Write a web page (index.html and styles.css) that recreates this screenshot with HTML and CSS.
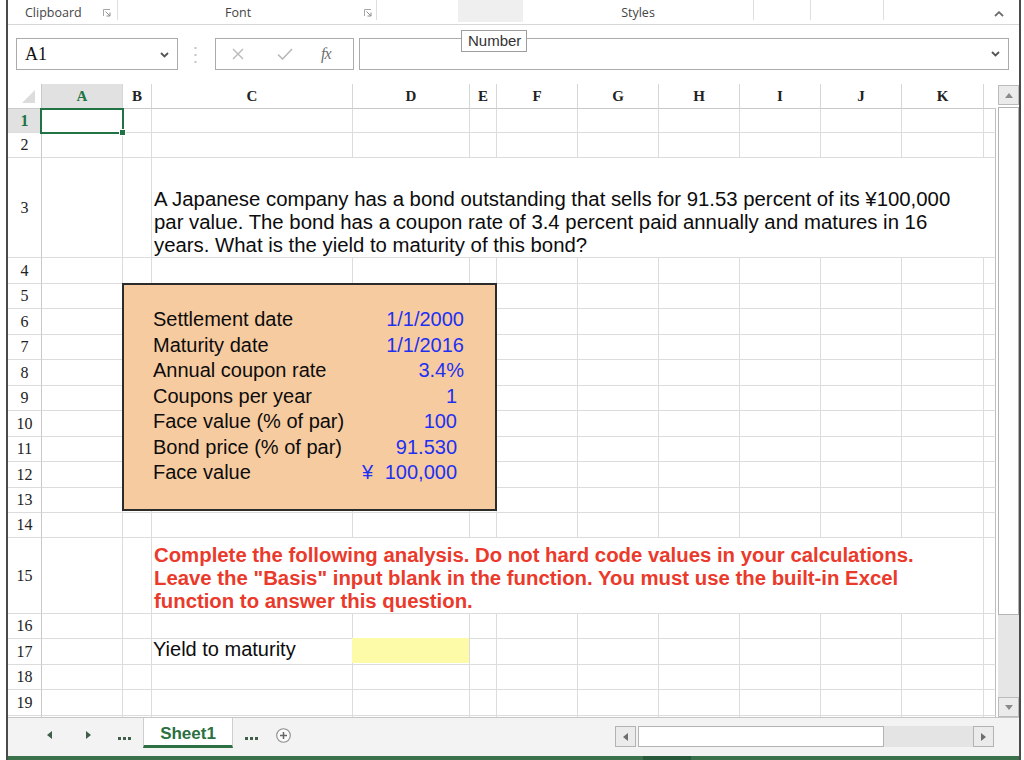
FILE: index.html
```html
<!DOCTYPE html>
<html lang="en">
<head>
  <meta charset="UTF-8">
  <title>Bond yield - Sheet1</title>
  <link rel="stylesheet" href="styles.css">
</head>
<body>

<div class="window">

  <div class="ribbon">
    <div class="group clip">
      <span>Clipboard</span>
      <svg class="launcher" width="8" height="8" viewBox="0 0 8 8"><path d="M0.5 7V0.5H7" fill="none" stroke="#a6a6a6"/><path d="M2.5 2.5L7 7M7 3.5V7H3.5" fill="none" stroke="#8c8c8c"/></svg>
    </div>
    <div class="group font-group">
      <span>Font</span>
      <svg class="launcher" width="8" height="8" viewBox="0 0 8 8"><path d="M0.5 7V0.5H7" fill="none" stroke="#a6a6a6"/><path d="M2.5 2.5L7 7M7 3.5V7H3.5" fill="none" stroke="#8c8c8c"/></svg>
    </div>
    <div class="group blank"></div>
    <div class="shaded"></div>
    <div class="group styles"><span>Styles</span></div>
    <div class="group cells"></div>
    <div class="group editing"></div>
    <div class="ribbon-end">
      <svg width="10" height="6" viewBox="0 0 10 6"><polyline points="1,5 5,1.2 9,5" fill="none" stroke="#6b6b6b" stroke-width="1.8"/></svg>
    </div>
  </div>

  <div class="formula-bar">
    <div class="name-box">
      <span>A1</span>
      <svg width="9" height="6" viewBox="0 0 9 6"><polyline points="1,1 4.5,4.5 8,1" fill="none" stroke="#555" stroke-width="1.8"/></svg>
    </div>
    <svg class="grip" width="3" height="20" viewBox="0 0 3 20"><rect x="0.5" y="2" width="2" height="2" fill="#c4c4c4"/><rect x="0.5" y="9" width="2" height="2" fill="#c4c4c4"/><rect x="0.5" y="16" width="2" height="2" fill="#c4c4c4"/></svg>
    <div class="fx-buttons">
      <svg class="cancel" width="12" height="12" viewBox="0 0 12 12"><path d="M1 1L11 11M11 1L1 11" stroke="#b9b9b9" stroke-width="1.4"/></svg>
      <svg class="enter" width="16" height="12" viewBox="0 0 16 12"><polyline points="1,6.5 5.5,11 15,1" fill="none" stroke="#b9b9b9" stroke-width="1.6"/></svg>
      <span class="fx">fx</span>
    </div>
    <div class="formula-input">
      <svg width="9" height="6" viewBox="0 0 9 6"><polyline points="1,1 4.5,4.5 8,1" fill="none" stroke="#555" stroke-width="1.8"/></svg>
    </div>
    <div class="tooltip">Number</div>
  </div>

  <div class="sheet-area">
    <div class="grid" id="grid">
      <div class="corner">
        <svg width="13" height="13" viewBox="0 0 13 13"><polygon points="13,0 13,13 0,13" fill="#dcdcdc"/></svg>
      </div>

      <div class="selection"><span class="handle"></span></div>

      <div class="question">
        <span>A Japanese company has a bond outstanding that sells for 91.53 percent of its ¥100,000</span>
        <span>par value. The bond has a coupon rate of 3.4 percent paid annually and matures in 16</span>
        <span>years. What is the yield to maturity of this bond?</span>
      </div>

      <div class="input-box">
        <div class="inputs">
          <span class="label">Settlement date</span><span class="val">1/1/2000</span>
          <span class="label">Maturity date</span><span class="val">1/1/2016</span>
          <span class="label">Annual coupon rate</span><span class="val">3.4%</span>
          <span class="label">Coupons per year</span><span class="val num">1</span>
          <span class="label">Face value (% of par)</span><span class="val num">100</span>
          <span class="label">Bond price (% of par)</span><span class="val num">91.530</span>
          <span class="label">Face value</span><span class="val num money"><span>¥</span><span>100,000</span></span>
        </div>
      </div>

      <div class="warning">
        <span>Complete the following analysis. Do not hard code values in your calculations.</span>
        <span>Leave the "Basis" input blank in the function. You must use the built-in Excel</span>
        <span>function to answer this question.</span>
      </div>

      <div class="ytm-label">Yield to maturity</div>
      <div class="ytm-answer"></div>
    </div>

    <div class="vscroll">
      <div class="sb-btn up"><svg width="8" height="5" viewBox="0 0 8 5"><polygon points="0,5 4,0 8,5" fill="#8a8a8a"/></svg></div>
      <div class="sb-thumb"></div>
      <div class="sb-track"></div>
      <div class="sb-btn down"><svg width="8" height="5" viewBox="0 0 8 5"><polygon points="0,0 8,0 4,5" fill="#8a8a8a"/></svg></div>
    </div>
  </div>

  <div class="tabs">
    <svg class="nav-prev" width="5" height="8" viewBox="0 0 5 8"><polygon points="5,0 5,8 0,4" fill="#3f5f4a"/></svg>
    <svg class="nav-next" width="5" height="8" viewBox="0 0 5 8"><polygon points="0,0 0,8 5,4" fill="#3f5f4a"/></svg>
    <svg class="dots first" width="13" height="3" viewBox="0 0 13 3"><rect x="0" y="0" width="3" height="3" fill="#3f5f4a"/><rect x="5" y="0" width="3" height="3" fill="#3f5f4a"/><rect x="10" y="0" width="3" height="3" fill="#3f5f4a"/></svg>
    <div class="tab">Sheet1</div>
    <svg class="dots" width="13" height="3" viewBox="0 0 13 3"><rect x="0" y="0" width="3" height="3" fill="#3f5f4a"/><rect x="5" y="0" width="3" height="3" fill="#3f5f4a"/><rect x="10" y="0" width="3" height="3" fill="#3f5f4a"/></svg>
    <svg class="add-sheet" width="15" height="15" viewBox="0 0 15 15"><circle cx="7.5" cy="7.5" r="6.8" fill="#fafafa" stroke="#8d8d8d" stroke-width="1.1"/><path d="M7.5 4V11M4 7.5H11" stroke="#666" stroke-width="1.5"/></svg>
    <div class="hscroll">
      <div class="hs-btn"><svg width="5" height="8" viewBox="0 0 5 8"><polygon points="5,0 5,8 0,4" fill="#6e6e6e"/></svg></div>
      <div class="hs-thumb"></div>
      <div class="hs-track"></div>
      <div class="hs-btn"><svg width="5" height="8" viewBox="0 0 5 8"><polygon points="0,0 0,8 5,4" fill="#6e6e6e"/></svg></div>
    </div>
  </div>

  <div class="status"><span class="status-mark"></span></div>
</div>

<script>
  const letters = ['A', 'B', 'C', 'D', 'E', 'F', 'G', 'H', 'I', 'J', 'K', ''];
  const grid = document.getElementById('grid');

  function addCell(cls, row, col, text) {
    const div = document.createElement('div');
    div.className = cls;
    div.style.gridRow = row;
    div.style.gridColumn = col;
    if (text) div.textContent = text;
    grid.appendChild(div);
  }

  letters.forEach((l, i) => {
    let cls = 'col-head';
    if (i === 0) cls += ' active';
    if (i === letters.length - 1) cls += ' edge';
    addCell(cls, 1, i + 2, l);
  });

  for (let r = 1; r <= 20; r++) {
    addCell('row-head' + (r === 1 ? ' active' : ''), r + 1, 1, r < 20 ? String(r) : '');
    for (let c = 0; c < letters.length; c++) {
      addCell('cell' + (c === letters.length - 1 ? ' edge' : ''), r + 1, c + 2);
    }
  }
</script>
</body>
</html>
```

FILE: styles.css
```css
body {
  margin: 0;
  background: #fff;
  font-family: "Liberation Sans", Arial, sans-serif;
  overflow: hidden;
}
.window {
  width: 1015px;
  height: 760px;
  margin-left: 6px;
  border-left: 2px solid #4b4b4b;
  border-right: 2px solid #4b4b4b;
  box-sizing: border-box;
  display: flex;
  flex-direction: column;
}

/* ribbon group labels */
.ribbon {
  flex: none;
  height: 25px;
  box-sizing: border-box;
  border-bottom: 1px solid #d7d7d7;
  display: flex;
  align-items: flex-start;
  font-family: "Open Sans", sans-serif;
  font-size: 12.5px;
  line-height: 17px;
  color: #454545;
}
.group {
  height: 20px;
  box-sizing: border-box;
  padding-top: 4px;
  border-right: 1px solid #dedede;
  display: flex;
  align-items: flex-start;
}
.launcher {
  margin-top: 5px;
}
.clip {
  width: 110px;
  padding-left: 17px;
  padding-right: 6px;
  justify-content: space-between;
}
.font-group {
  width: 259px;
  padding-left: 107px;
  padding-right: 4px;
  justify-content: space-between;
}
.blank {
  width: 81px;
  border-right: none;
}
.shaded {
  width: 65px;
  height: 22px;
  background: #efefef;
}
.styles {
  width: 231px;
  justify-content: center;
}
.cells {
  width: 57px;
}
.editing {
  width: 73px;
}
.ribbon-end {
  flex: 1;
  padding: 11px 0 0 110px;
}
.ribbon-end svg {
  display: block;
}

/* name box and formula bar */
.formula-bar {
  flex: none;
  height: 59px;
  box-sizing: border-box;
  padding-top: 13px;
  display: flex;
  align-items: flex-start;
  position: relative;
}
.name-box {
  width: 162px;
  height: 32px;
  margin-left: 8px;
  box-sizing: border-box;
  border: 1px solid #ababab;
  display: flex;
  align-items: center;
  justify-content: space-between;
  padding: 0 8px 0 8px;
  font-family: "Liberation Serif", serif;
  font-size: 18px;
  color: #111;
}
.name-box svg {
  margin-top: 2px;
}
.grip {
  margin: 7px 0 0 16px;
}
.fx-buttons {
  width: 139px;
  height: 32px;
  margin-left: 18px;
  box-sizing: border-box;
  border: 1px solid #ababab;
  display: flex;
  align-items: center;
}
.cancel {
  margin-left: 16px;
}
.enter {
  margin-left: 33px;
}
.fx {
  margin-left: 28px;
  font-family: "Liberation Serif", serif;
  font-style: italic;
  font-size: 16px;
  color: #707070;
  letter-spacing: -1px;
}
.formula-input {
  width: 650px;
  height: 32px;
  margin-left: 5px;
  box-sizing: border-box;
  border: 1px solid #ababab;
  display: flex;
  align-items: center;
  justify-content: flex-end;
  padding-right: 8px;
}
.tooltip {
  position: absolute;
  left: 453px;
  top: 5px;
  width: 66px;
  height: 22px;
  box-sizing: border-box;
  border: 1px solid #9d9d9d;
  background: #fff;
  padding-left: 6px;
  font-size: 15px;
  line-height: 19px;
  color: #333;
}

/* worksheet */
.sheet-area {
  flex: none;
  height: 633px;
  display: flex;
}
.grid {
  width: 988px;
  height: 633px;
  overflow: hidden;
  display: grid;
  grid-template-columns: 34px 81px 29px 201px 117px 27px 81px 81px 81px 81px 81px 82px 12px;
  grid-template-rows: 25px 24px 25px 100px 26px 25px 26px 25px 26px 25px 26px 25px 26px 25px 25px 76px 25px 26px 25px 26px 25px;
}
.cell {
  box-sizing: border-box;
  border-right: 1px solid #dcdcdc;
  border-bottom: 1px solid #dcdcdc;
}
.cell.edge {
  border-right-color: #bdbdbd;
}
.corner {
  grid-row: 1;
  grid-column: 1;
  box-sizing: border-box;
  border-right: 1px solid #c9c9c9;
  border-bottom: 1px solid #c9c9c9;
  display: flex;
  align-items: flex-end;
  justify-content: flex-end;
  padding: 0 6px 5px 0;
}
.col-head {
  box-sizing: border-box;
  border-right: 1px solid #d6d6d6;
  border-bottom: 1px solid #c9c9c9;
  text-align: center;
  font-family: "Liberation Serif", serif;
  font-size: 15px;
  font-weight: bold;
  line-height: 25px;
  color: #222;
}
.col-head.edge {
  border-right: none;
}
.col-head.active,
.row-head.active {
  background: #e1e1e1;
  color: #217346;
}
.row-head {
  box-sizing: border-box;
  border-right: 1px solid #c9c9c9;
  border-bottom: 1px solid #dcdcdc;
  display: flex;
  align-items: center;
  justify-content: center;
  font-family: "Liberation Serif", serif;
  font-size: 16px;
  color: #222;
}
.row-head.active {
  font-weight: bold;
}

.selection {
  grid-row: 2;
  grid-column: 2;
  z-index: 2;
  position: relative;
  margin: -1px -1px -1px -2px;
  border: 2px solid #217346;
}
.handle {
  position: absolute;
  right: -4px;
  bottom: -4px;
  width: 5px;
  height: 5px;
  background: #217346;
  border: 1px solid #fff;
}

.question,
.warning {
  z-index: 1;
  background: #fff;
  box-sizing: border-box;
  border-bottom: 1px solid #dcdcdc;
  display: flex;
  flex-direction: column;
  justify-content: flex-end;
  padding-left: 2px;
  font-size: 20.35px;
  white-space: nowrap;
}
.question {
  grid-row: 4;
  grid-column: 4 / 14;
  border-right: 1px solid #bdbdbd;
  padding-bottom: 0;
  line-height: 23px;
  color: #0c0c0c;
}
.warning {
  grid-row: 16;
  grid-column: 4 / 13;
  border-right: 1px solid #dcdcdc;
  padding-bottom: 0;
  line-height: 23px;
  font-weight: bold;
  color: #ea3a2b;
}

.input-box {
  grid-row: 6 / 15;
  grid-column: 3 / 7;
  z-index: 1;
  margin: -1px 0 2px -1px;
  background: #f7cba0;
  border: 2px solid #2b2b2b;
  padding: 24px 0 0 28px;
}
.inputs {
  display: grid;
  grid-template-columns: 201px 117px;
  grid-template-rows: 26px 25px 26px 25px 26px 25px 26px;
  font-size: 20px;
  line-height: 21px;
  white-space: nowrap;
}
.label {
  padding-left: 1px;
  color: #0c0c0c;
}
.val {
  text-align: right;
  padding-right: 6px;
  color: #1d31f2;
}
.val.num {
  padding-right: 13px;
}
.money {
  display: flex;
  justify-content: space-between;
  padding-left: 9px;
}

.ytm-label {
  grid-row: 18;
  grid-column: 4;
  z-index: 1;
  padding-left: 1px;
  font-size: 20px;
  line-height: 21px;
  color: #0c0c0c;
}
.ytm-answer {
  grid-row: 18;
  grid-column: 5;
  z-index: 1;
  margin: -1px 1px 2px -1px;
  background: #fefba8;
}

/* vertical scroll bar */
.vscroll {
  width: 21px;
  margin-left: 2px;
  display: flex;
  flex-direction: column;
}
.sb-btn {
  flex: none;
  height: 20px;
  box-sizing: border-box;
  border: 1px solid #bcbcbc;
  background: #ebebeb;
  display: flex;
  align-items: center;
  justify-content: center;
}
.sb-btn.up {
  margin-top: 1px;
}
.sb-thumb {
  flex: none;
  height: 508px;
  margin-top: 2px;
  box-sizing: border-box;
  border: 1px solid #b3b3b3;
  background: #fff;
}
.sb-track {
  flex: 1;
  background: #e6e6e6;
}

/* sheet tabs */
.tabs {
  flex: none;
  height: 39px;
  box-sizing: border-box;
  border-top: 1px solid #c6c6c6;
  background: #f3f3f3;
  display: flex;
  align-items: flex-start;
}
.nav-prev {
  margin: 13px 0 0 39px;
}
.nav-next {
  margin: 13px 0 0 34px;
}
.dots {
  margin: 19px 0 0 12px;
}
.dots.first {
  margin-left: 27px;
}
.tab {
  width: 90px;
  height: 30px;
  margin-left: 12px;
  box-sizing: border-box;
  background: #fff;
  border-left: 1px solid #cfcfcf;
  border-right: 1px solid #cfcfcf;
  border-bottom: 3px solid #2d7142;
  text-align: center;
  padding-top: 6px;
  font-size: 17px;
  font-weight: bold;
  color: #2a7040;
}
.add-sheet {
  margin: 10px 0 0 18px;
}
.hscroll {
  width: 379px;
  height: 21px;
  margin: 8px 0 0 324px;
  display: flex;
}
.hs-btn {
  width: 21px;
  box-sizing: border-box;
  border: 1px solid #b3b3b3;
  background: #ebebeb;
  display: flex;
  align-items: center;
  justify-content: center;
}
.hs-thumb {
  width: 246px;
  margin-left: 2px;
  box-sizing: border-box;
  border: 1px solid #b3b3b3;
  background: #fff;
}
.hs-track {
  flex: 1;
  background: #e4e4e4;
}

.status {
  flex: none;
  height: 4px;
  background: #3b714a;
  display: flex;
}
.status-mark {
  width: 48px;
  margin-left: 635px;
  background: #28593a;
}
```
